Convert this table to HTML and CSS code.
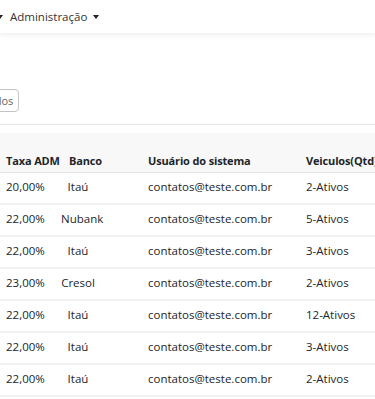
FILE: index.html
```html
<!DOCTYPE html>
<html lang="pt-BR">
<head>
  <meta charset="UTF-8" />
  <meta name="viewport" content="width=device-width, initial-scale=1.0" />
  <title>Clientes</title>
  <link rel="stylesheet" href="styles.css">
</head>
<body>
  <!-- Top navigation -->
  <nav class="topbar">
    <ul class="menu">
      <li class="menu-item menu-cut"><span class="caret"></span></li>
      <li class="menu-item">Administração <span class="caret"></span></li>
    </ul>
  </nav>

  <div class="toolbar">
    <button class="btn-outline">Filtrar Veículos</button>
  </div>

  <div class="table-wrap">
    <table class="grid">
      <colgroup>
        <col class="c-taxa">
        <col class="c-banco">
        <col class="c-user">
        <col class="c-veic">
      </colgroup>
      <thead>
        <tr>
          <th>Taxa ADM</th>
          <th>Banco</th>
          <th>Usuário do sistema</th>
          <th>Veiculos(Qtd)</th>
        </tr>
      </thead>
      <tbody>
        <tr><td>20,00%</td><td><span class="bank">Itaú</span></td><td>contatos@teste.com.br</td><td>2-Ativos</td></tr>
        <tr><td>22,00%</td><td><span class="bank">Nubank</span></td><td>contatos@teste.com.br</td><td>5-Ativos</td></tr>
        <tr><td>22,00%</td><td><span class="bank">Itaú</span></td><td>contatos@teste.com.br</td><td>3-Ativos</td></tr>
        <tr><td>23,00%</td><td><span class="bank">Cresol</span></td><td>contatos@teste.com.br</td><td>2-Ativos</td></tr>
        <tr><td>22,00%</td><td><span class="bank">Itaú</span></td><td>contatos@teste.com.br</td><td>12-Ativos</td></tr>
        <tr><td>22,00%</td><td><span class="bank">Itaú</span></td><td>contatos@teste.com.br</td><td>3-Ativos</td></tr>
        <tr><td>22,00%</td><td><span class="bank">Itaú</span></td><td>contatos@teste.com.br</td><td>2-Ativos</td></tr>
      </tbody>
    </table>
  </div>
</body>
</html>
```

FILE: styles.css
```css
body {
  margin: 0;
  background: #fff;
  font-family: 'Open Sans', 'Noto Sans', sans-serif;
  font-size: 11.5px;
  color: #212529;
  overflow: hidden;
}
/* Navbar */
.topbar {
  height: 33px;
  background: #fff;
  box-shadow: 0 2px 5px rgba(0,0,0,0.07);
  position: relative;
  z-index: 1;
}
.menu {
  list-style: none;
  margin: 0;
  padding: 0;
  display: flex;
  align-items: center;
  height: 100%;
  gap: 7px;
}
.menu-item {
  font-size: 11.5px;
  color: #333;
  display: flex;
  align-items: center;
  gap: 6px;
  white-space: nowrap;
}
.menu-cut {
  margin-left: -3px;
}
.caret {
  display: inline-block;
  width: 0;
  height: 0;
  border-left: 3.5px solid transparent;
  border-right: 3.5px solid transparent;
  border-top: 4px solid #222;
}
/* Toolbar with the filter button */
.toolbar {
  padding: 56px 0 0;
  height: 35px;
  border-bottom: 1px solid #e6e6e6;
  display: flex;
  align-items: flex-start;
}
.btn-outline {
  margin-left: -68px;
  height: 23px;
  padding: 0 5px;
  font-family: inherit;
  font-size: 11px;
  color: #666;
  background: #fff;
  border: 1px solid #c4c4c4;
  border-radius: 4px;
  white-space: nowrap;
}
/* Table */
.table-wrap {
  margin-top: 8px;
  padding-top: 12px;
  background: #f8f8f9;
}
.grid {
  width: 520px;
  table-layout: fixed;
  border-collapse: collapse;
}
.c-taxa { width: 61px; }
.c-banco { width: 79px; }
.c-user { width: 158px; }
.c-veic { width: 222px; }
.grid th {
  text-align: left;
  font-weight: 700;
  font-size: 11px;
  letter-spacing: -0.15px;
  height: 24px;
  padding: 3px 0 0 8px;
  vertical-align: middle;
  border-bottom: 1px solid #e3e3e3;
  white-space: nowrap;
}
.grid th:first-child,
.grid td:first-child {
  padding-left: 6px;
}
.grid tbody tr {
  background: #fff;
}
.grid td {
  height: 26px;
  padding: 0 0 4px 8px;
  vertical-align: middle;
  border-bottom: 2px solid #f1f1f1;
  white-space: nowrap;
}
.grid td:nth-child(2) {
  padding-left: 0;
}
.bank {
  display: inline-block;
  width: 34px;
  text-align: center;
}
```
